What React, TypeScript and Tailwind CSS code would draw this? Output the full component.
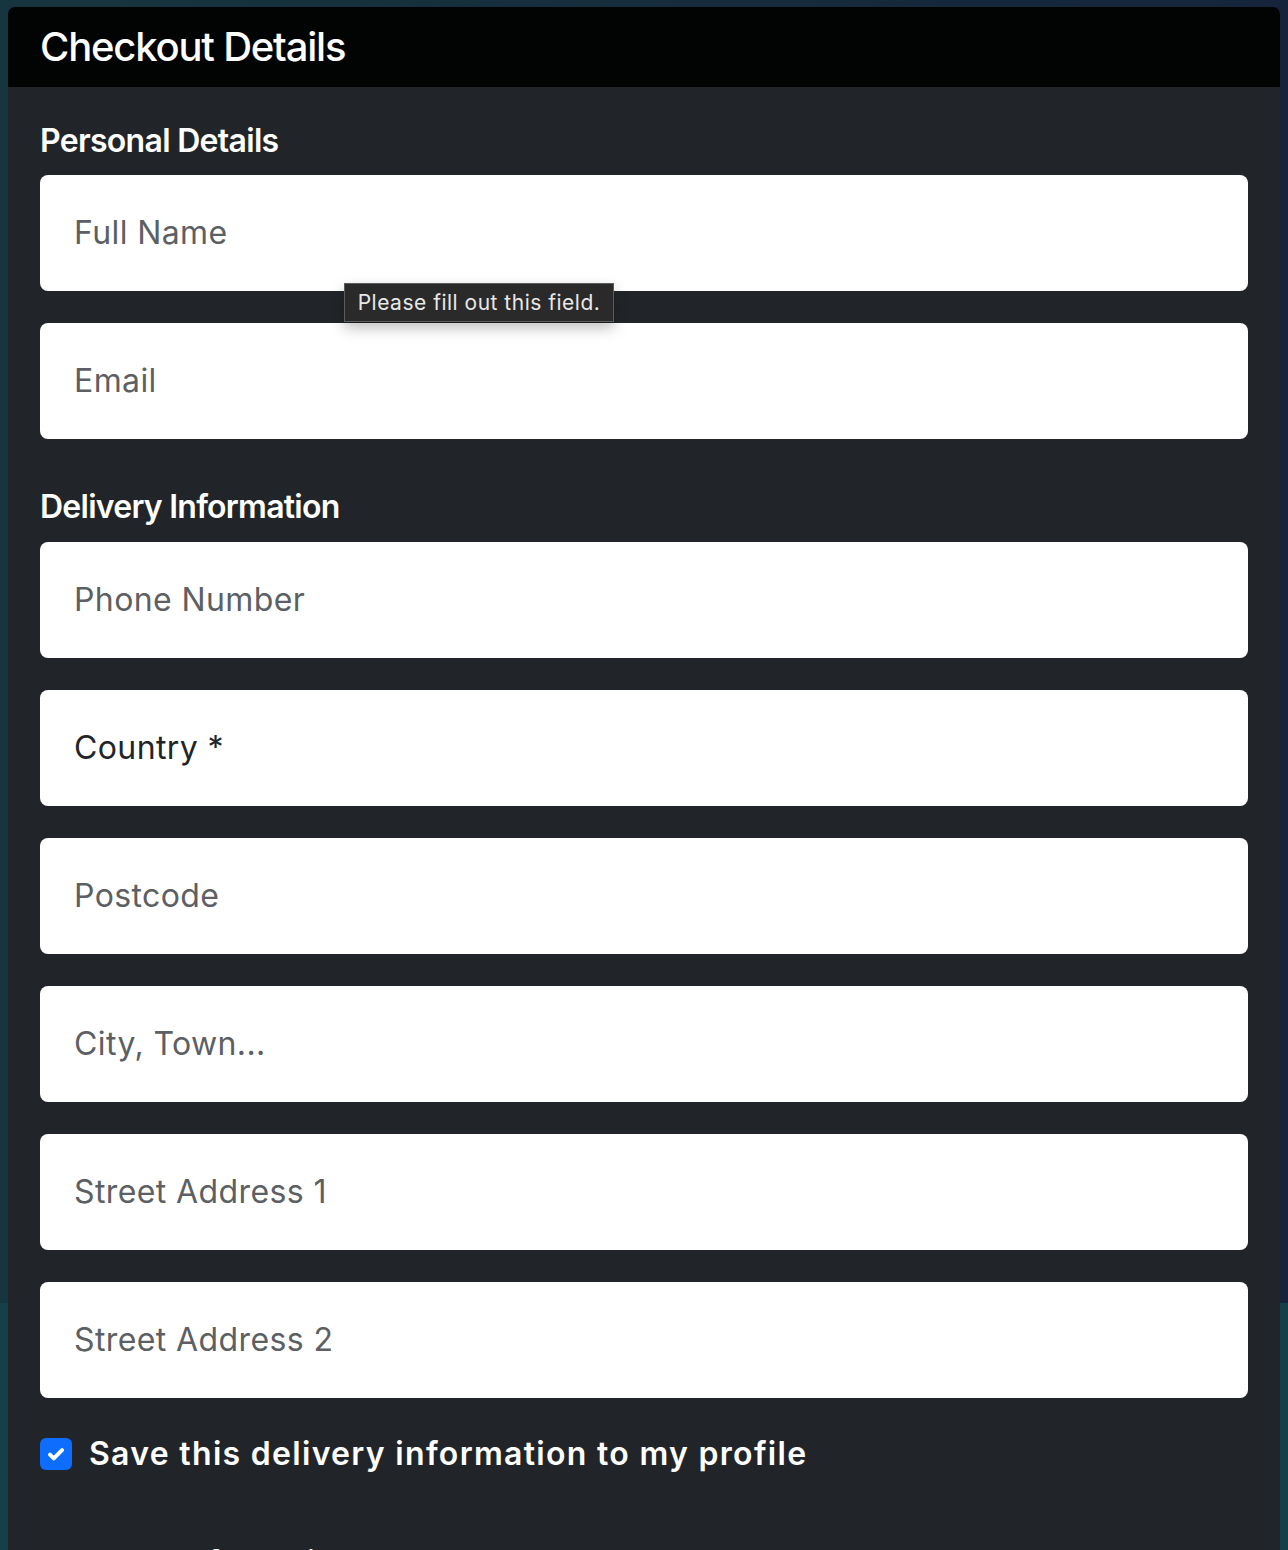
const fields = [
  "Phone Number",
  "Country *",
  "Postcode",
  "City, Town...",
  "Street Address 1",
  "Street Address 2",
];

const Field = ({ label, filled }: { label: string; filled?: boolean }) => (
  <div className="h-[116px] w-full bg-white rounded-[8px] flex items-center pl-[34px]">
    <span
      className={
        filled
          ? "text-[32px] leading-none text-[#212529] tracking-[0.4px]"
          : "text-[32px] leading-none text-[#5c5f63] tracking-[0.4px]"
      }
    >
      {label}
    </span>
  </div>
);

export default function App() {
  return (
    <div
      className="w-full h-[1550px] overflow-hidden pt-[7px] px-[8px] bg-[linear-gradient(to_bottom,transparent_1303px,#143f4b_1303px),linear-gradient(to_right,#17353f,#15243a)]"
      style={{ fontFamily: "Inter, 'Noto Sans', sans-serif" }}
    >
      <div className="w-full rounded-t-[7px] overflow-hidden">
        <div className="h-[80px] bg-[#020404] flex items-center px-[32px]">
          <h1 className="text-[40px] leading-none font-medium text-white tracking-[-1.2px]">
            Checkout Details
          </h1>
        </div>
        <div className="bg-[#212529] px-[32px] pt-[35px] pb-[40px]">
          <h2 className="text-[32px] leading-[38px] font-semibold text-white mb-[15px] tracking-[-0.7px]">
            Personal Details
          </h2>
          <div className="flex flex-col gap-[32px]">
            <div className="relative">
              <Field label="Full Name" />
              <div className="absolute left-[304px] top-[108px] z-10 w-[270px] h-[39px] bg-[#2a2a2a] border border-[#5c5c5c] flex items-center justify-center shadow-[0_6px_14px_rgba(0,0,0,0.25)]">
                <span className="text-[21px] leading-none text-[#e8e8e8] tracking-[0.5px]">
                  Please fill out this field.
                </span>
              </div>
            </div>
            <Field label="Email" />
          </div>
          <h2 className="text-[32px] leading-[38px] font-semibold text-white mt-[49px] mb-[16px] tracking-[-0.75px]">
            Delivery Information
          </h2>
          <div className="flex flex-col gap-[32px]">
            {fields.map((f) => (
              <Field key={f} label={f} filled={f === "Country *"} />
            ))}
          </div>
          <div className="flex items-center gap-[17px] mt-[40px]">
            <div className="w-[32px] h-[32px] rounded-[6px] bg-[#0d6efd] flex items-center justify-center">
              <svg width="22" height="22" viewBox="0 0 20 20" fill="none">
                <path
                  d="M4.5 10.5l3.5 3.5 7.5-7.5"
                  stroke="white"
                  strokeWidth="3.6"
                  strokeLinecap="round"
                  strokeLinejoin="round"
                />
              </svg>
            </div>
            <span className="text-[32px] leading-none font-semibold text-white tracking-[1.3px]">
              Save this delivery information to my profile
            </span>
          </div>
          <h2 className="text-[32px] leading-[38px] font-semibold text-white mt-[74px] tracking-[-0.5px]">
            Payment Information
          </h2>
        </div>
      </div>
    </div>
  );
}
